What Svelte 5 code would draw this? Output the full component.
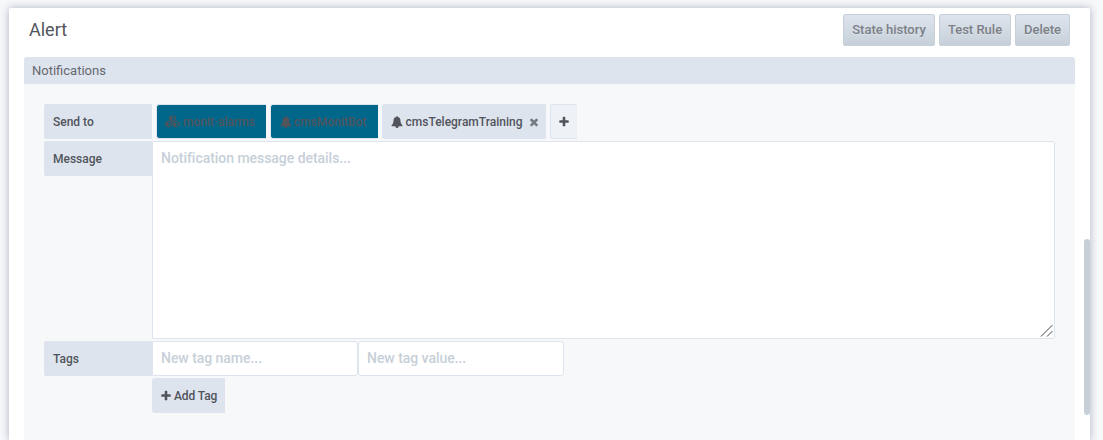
<script>
  const plus = 'M1600 736v192q0 40-28 68t-68 28h-416v416q0 40-28 68t-68 28h-192q-40 0-68-28t-28-68v-416h-416q-40 0-68-28t-28-68v-192q0-40 28-68t68-28h416v-416q0-40 28-68t68-28h192q40 0 68 28t28 68v416h416q40 0 68 28t28 68z';
  const times = 'M1490 1322q0 40-28 68l-136 136q-28 28-68 28t-68-28l-294-294-294 294q-28 28-68 28t-68-28l-136-136q-28-28-28-68t28-68l294-294-294-294q-28-28-28-68t28-68l136-136q28-28 68-28t68 28l294 294 294-294q28-28 68-28t68 28l136 136q28 28 28 68t-28 68l-294 294 294 294q28 28 28 68z';
  const bell = 'M912 1696q0-16-16-16-59 0-101.5-42.5t-42.5-101.5q0-16-16-16t-16 16q0 73 51.5 124.5t124.5 51.5q16 0 16-16zm816-288q0 52-38 90t-90 38h-448q0 106-75 181t-181 75-181-75-75-181h-448q-52 0-90-38t-38-90q50-42 91-88t85-119.5 74.5-158.5 50-206 19.5-260q0-152 117-282.5t307-158.5q-8-19-8-39 0-40 28-68t68-28 68 28 28 68q0 20-8 39 190 28 307 158.5t117 282.5q0 139 19.5 260t50 206 74.5 158.5 85 119.5 91 88z';
  const actions = [
    { text: 'State history', width: 92 },
    { text: 'Test Rule', width: 72 },
    { text: 'Delete', width: 55 }
  ];
</script>

{#snippet icon(d, size)}
  <svg width={size} height={size} viewBox="0 0 1792 1792"><path {d} /></svg>
{/snippet}

{#snippet cube(x, y)}
  <g transform="translate({x} {y})">
    <path class="edge" d="M3.500.6 6.500 1.800V5L3.500 6.400.5 5V1.800z" />
    <path class="edge" d="M.5 1.900 3.500 3.200 6.500 1.900" />
    <path d="M.5 1.900 3.500 3.200V6.400L.5 5z" />
  </g>
{/snippet}

<main class="panel">
  <header>
    <h1>Alert</h1>
    <div class="actions">
      {#each actions as a}<button style="width:{a.width}px">{a.text}</button>{/each}
    </div>
  </header>
  <section>
    <h2>Notifications</h2>
    <div class="body">
      <div class="row">
        <span class="label sendto">Send to</span>
        <span class="chip dark first">
          <svg width="15" height="13" viewBox="0 0 15 13">
            {@render cube(4, 0)}
            {@render cube(0.3, 5.6)}
            {@render cube(7.7, 5.6)}
          </svg>
          <span>monit-alarms</span>
        </span>
        <span class="chip dark second">{@render icon(bell, 12)}<span>cmsMonitBot</span></span>
        <span class="chip light">{@render icon(bell, 12)}<span>cmsTelegramTraining</span><i>{@render icon(times, 12)}</i></span>
        <button class="add" aria-label="Add">{@render icon(plus, 12)}</button>
      </div>
      <div class="row message">
        <span class="label">Message</span>
        <div class="area">
          <span>Notification message details...</span>
          <svg class="grip" width="13" height="13" viewBox="0 0 13 13"><path d="M1 12.500 12.500 1M7 12.500 12.500 7" /></svg>
        </div>
      </div>
      <div class="row">
        <span class="label">Tags</span>
        <input placeholder="New tag name..." />
        <input placeholder="New tag value..." />
      </div>
      <button class="addtag">{@render icon(plus, 12)}<span>Add Tag</span></button>
    </div>
  </section>
  <div class="scroll"></div>
</main>

<style>
  :global(body) { background: #f7f8fa; overflow: hidden; }
  * { box-sizing: border-box; }
  .panel {
    position: relative; width: 1081px; height: 432px; margin: 8px 0 0 9px; padding: 0 15px;
    background: #fff; border-radius: 2px 2px 0 0; box-shadow: 0 0 8px #a9b2c0;
    font: 500 12px/18px Roboto, sans-serif; color: #52545c;
    clip-path: inset(-8px -13px 0 -9px);
  }
  svg { display: block; fill: currentColor; flex: none; }
  .edge { fill: none; stroke: currentColor; stroke-width: 1; stroke-linejoin: round; }
  header { height: 49px; display: flex; justify-content: space-between; padding: 6px 5px 0; }
  h1 { margin: 3px 0 0; font-size: 18px; line-height: 26px; font-weight: 400; }
  .actions { display: flex; gap: 4px; }
  button { font-family: inherit; font-weight: 500; margin: 0; padding: 0; color: inherit; }
  .actions button {
    height: 32px; border: 1px solid #c7d0d9; border-radius: 2px; font-size: 13px; line-height: 18px;
    background: linear-gradient(#dde4ed, #c7d0d9); color: #7b8087; text-shadow: 0 1px 0 rgba(255,255,255,.3);
  }
  h2 { height: 27px; margin: 0; padding-left: 8px; background: #dde4ed; border-radius: 3px 3px 0 0; font-size: 13px; line-height: 27px; font-weight: 400; color: #666870; }
  .body { height: 356px; padding: 20px 20px 0; background: #f7f8fa; }
  .row { display: flex; height: 35px; margin-bottom: 2px; }
  .label { width: 108px; height: 35px; line-height: 37px; padding-left: 9px; background: #dde4ed; border-radius: 2px 0 0 2px; flex: none; }
  .sendto { margin-right: 4px; }
  .chip { display: flex; align-items: center; height: 35px; margin-right: 4px; padding-left: 9px; border-radius: 3px 0 0 3px; }
  .chip span { margin-left: 2.5px; }
  .dark { background: #00678a; border: 1px solid #dde4ed; border-right: 0; color: #52545c; }
  .first { width: 110px; padding-left: 8px; }
  .first span { margin-left: 3px; }
  .second { width: 108px; }
  .second span { margin-left: 2px; }
  .light { width: 164px; background: #dde4ed; }
  .light i { margin-left: 5px; color: #767980; }
  .add { width: 27px; height: 35px; padding-left: 7px; background: #eef1f5; border: 1px solid #dde4ed; border-right: 0; border-radius: 3px 0 0 3px; }
  .message { height: 198px; }
  .area { position: relative; width: 903px; height: 198px; padding: 7px 8px; background: #fff; border: 1px solid #dde4ed; border-radius: 0 3px 3px 0; color: #c7d0d9; font-size: 14px; line-height: 18px; letter-spacing: -.04px; }
  .grip { position: absolute; right: 1px; bottom: 1px; fill: none; stroke: #444; stroke-width: 1; }
  input { width: 206px; height: 35px; margin: 0; padding: 0 8px 2px; border: 1px solid #dde4ed; border-radius: 0 3px 3px 0; background: #fff; font: 500 14px/18px Roboto, sans-serif; letter-spacing: -.04px; }
  input + input { border-radius: 3px; }
  input::placeholder { color: #c7d0d9; opacity: 1; }
  .addtag { display: flex; align-items: center; width: 73px; height: 35px; margin-left: 108px; padding-left: 8px; background: #dde4ed; border: 0; border-radius: 3px 0 0 3px; font-size: 12px; line-height: 18px; }
  .addtag span { margin-left: 2px; white-space: nowrap; letter-spacing: -.1px; }
  .scroll { position: absolute; right: 0; top: 231px; width: 6px; height: 176px; border-radius: 3px; background: #c7d0d9; }
</style>
